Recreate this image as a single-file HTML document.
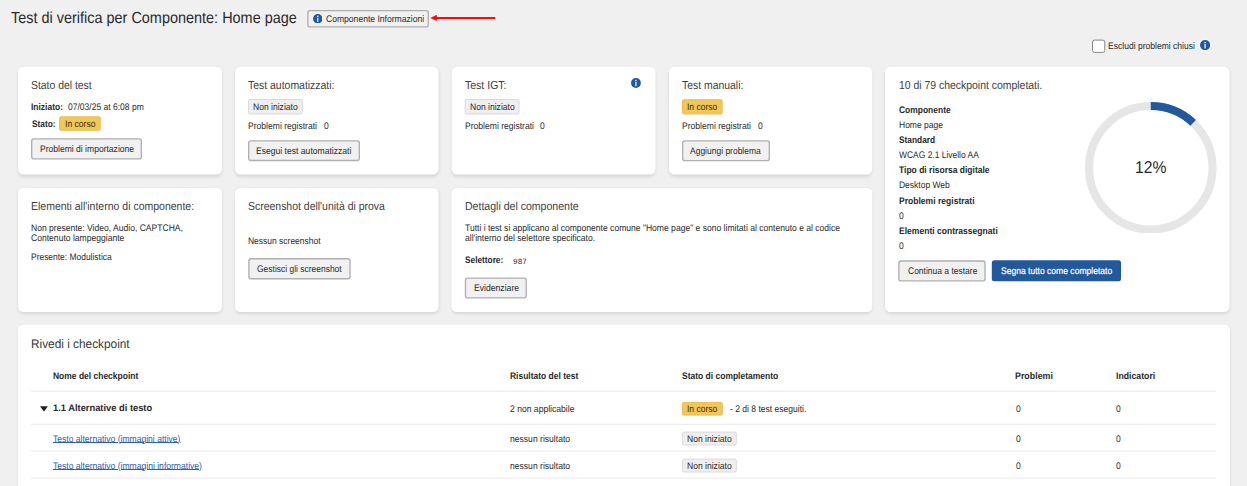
<!DOCTYPE html>
<html><head><meta charset="utf-8">
<style>
*{box-sizing:border-box;margin:0;padding:0}
html,body{width:1247px;height:486px;overflow:hidden;background:#f0f0f0;font-family:"Liberation Sans",sans-serif;color:#222;text-rendering:geometricPrecision}
.a{position:absolute;white-space:nowrap;line-height:1;transform-origin:0 0}
.sh{position:absolute;border-radius:5px;box-shadow:0 1.5px 3.5px 1px rgba(0,0,0,.11)}
</style></head><body>
<div class="sh" style="left:19.0px;top:67.8px;width:202.0px;height:105.8px"></div>
<div class="sh" style="left:236.0px;top:67.8px;width:201.5px;height:105.8px"></div>
<div class="sh" style="left:452.7px;top:67.8px;width:201.8px;height:105.8px"></div>
<div class="sh" style="left:670.0px;top:67.8px;width:201.3px;height:105.8px"></div>
<div class="sh" style="left:886.0px;top:67.8px;width:342.6px;height:243.2px"></div>
<div class="sh" style="left:19.0px;top:188.9px;width:202.0px;height:122.1px"></div>
<div class="sh" style="left:236.0px;top:188.9px;width:201.5px;height:122.1px"></div>
<div class="sh" style="left:452.5px;top:188.9px;width:418.8px;height:122.1px"></div>
<div class="sh" style="left:18.7px;top:325.8px;width:1210.3px;height:193.2px"></div>
<svg class="a" style="left:0;top:0" width="1247" height="486" viewBox="0 0 1247 486">
<rect x="307.88" y="10.58" width="120.35" height="16.25" rx="2.2" fill="#f1f1f1" stroke="#b0b0b0" stroke-width="1.35"/>
<rect x="1092.50" y="40.10" width="12.30" height="12.30" rx="2" fill="#fff" stroke="#858585" stroke-width="1"/>
<rect x="18.00" y="66.80" width="204.00" height="107.80" rx="5.5" fill="#fff"/>
<rect x="235.00" y="66.80" width="203.50" height="107.80" rx="5.5" fill="#fff"/>
<rect x="451.70" y="66.80" width="203.80" height="107.80" rx="5.5" fill="#fff"/>
<rect x="669.00" y="66.80" width="203.30" height="107.80" rx="5.5" fill="#fff"/>
<rect x="885.00" y="66.80" width="344.60" height="245.20" rx="5.5" fill="#fff"/>
<rect x="18.00" y="187.90" width="204.00" height="124.10" rx="5.5" fill="#fff"/>
<rect x="235.00" y="187.90" width="203.50" height="124.10" rx="5.5" fill="#fff"/>
<rect x="451.50" y="187.90" width="420.80" height="124.10" rx="5.5" fill="#fff"/>
<rect x="17.70" y="324.80" width="1212.30" height="195.20" rx="5.5" fill="#fff"/>
<rect x="59.60" y="116.80" width="40.70" height="13.50" rx="1.2" fill="#f1c75a" stroke="#ecc04e" stroke-width="1"/>
<rect x="31.68" y="138.88" width="109.65" height="19.95" rx="2.2" fill="#f1f1f1" stroke="#b0b0b0" stroke-width="1.35"/>
<rect x="248.50" y="99.50" width="53.80" height="14.50" rx="1.5" fill="#efefef" stroke="#dadada" stroke-width="1"/>
<rect x="248.68" y="140.88" width="110.65" height="19.65" rx="2.2" fill="#f1f1f1" stroke="#b0b0b0" stroke-width="1.35"/>
<rect x="465.20" y="99.50" width="53.80" height="14.50" rx="1.5" fill="#efefef" stroke="#dadada" stroke-width="1"/>
<rect x="682.50" y="99.70" width="39.70" height="14.30" rx="1.2" fill="#f1c75a" stroke="#ecc04e" stroke-width="1"/>
<rect x="682.67" y="140.88" width="86.65" height="19.75" rx="2.2" fill="#f1f1f1" stroke="#b0b0b0" stroke-width="1.35"/>
<rect x="898.88" y="260.98" width="86.15" height="19.85" rx="2.2" fill="#f1f1f1" stroke="#b0b0b0" stroke-width="1.35"/>
<rect x="991.80" y="260.30" width="129.20" height="21.00" rx="2.5" fill="#22589c"/>
<rect x="248.88" y="258.78" width="101.15" height="19.95" rx="2.2" fill="#f1f1f1" stroke="#b0b0b0" stroke-width="1.35"/>
<rect x="465.48" y="278.07" width="60.75" height="19.85" rx="2.2" fill="#f1f1f1" stroke="#b0b0b0" stroke-width="1.35"/>
<rect x="31.00" y="390.60" width="1185.00" height="1.00" rx="0" fill="#eaeaea"/>
<rect x="682.40" y="402.50" width="39.90" height="12.60" rx="1.2" fill="#f1c75a" stroke="#ecc04e" stroke-width="1"/>
<rect x="31.00" y="423.80" width="1185.00" height="1.00" rx="0" fill="#eaeaea"/>
<rect x="682.50" y="432.10" width="53.80" height="12.90" rx="1.5" fill="#efefef" stroke="#dadada" stroke-width="1"/>
<rect x="682.50" y="459.10" width="53.80" height="12.90" rx="1.5" fill="#efefef" stroke="#dadada" stroke-width="1"/>
<rect x="31.00" y="450.50" width="1185.00" height="1.00" rx="0" fill="#eaeaea"/>
<rect x="31.00" y="477.60" width="1185.00" height="1.00" rx="0" fill="#eaeaea"/>
</svg>
<div class="a" style="left:11.10px;top:11px;font-size:16px;color:#2a2a2a;transform:scaleX(0.9027);">Test di verifica per Componente: Home page</div>
<svg class="a" style="left:312.90px;top:13.70px" width="9.5" height="9.5" viewBox="0 0 10 10"><circle cx="5" cy="5" r="5" fill="#1f58a3"/><rect x="4.4" y="4" width="1.2" height="4.3" fill="#fff"/><rect x="4.35" y="1.8" width="1.3" height="1.5" fill="#fff"/></svg>
<div class="a" style="left:326.10px;top:15px;font-size:9.5px;color:#2a2a2a;transform:scaleX(0.9018);">Componente Informazioni</div>
<svg class="a" style="left:428px;top:12px" width="72" height="12" viewBox="428 12 72 12"><path d="M436 17.95 H494.5" stroke="#fb0a0e" stroke-width="2" stroke-linecap="round"/><path d="M430.3 17.95 L436.9 14.8 L436.9 21.1 Z" fill="#fb0a0e"/></svg>
<div class="a" style="left:1108.20px;top:42px;font-size:9.5px;color:#2a2a2a;transform:scaleX(0.8994);">Escludi problemi chiusi</div>
<div class="a" style="left:1197.7px;top:37.6px;width:14.8px;height:14.8px;border-radius:50%;background:rgba(255,255,255,.35)"></div>
<svg class="a" style="left:1200.00px;top:39.90px" width="10.2" height="10.2" viewBox="0 0 10 10"><circle cx="5" cy="5" r="5" fill="#1f58a3"/><rect x="4.4" y="4" width="1.2" height="4.3" fill="#fff"/><rect x="4.35" y="1.8" width="1.3" height="1.5" fill="#fff"/></svg>
<div class="a" style="left:31.00px;top:80px;font-size:11.6px;color:#404040;transform:scaleX(0.8970);">Stato del test</div>
<div class="a" style="left:31.00px;top:103px;font-size:9.5px;font-weight:bold;color:#2a2a2a;transform:scaleX(0.8902);">Iniziato:</div>
<div class="a" style="left:67.70px;top:103px;font-size:9.5px;color:#2a2a2a;transform:scaleX(0.8960);">07/03/25 at 6:08 pm</div>
<div class="a" style="left:31.70px;top:120px;font-size:9.5px;font-weight:bold;color:#2a2a2a;transform:scaleX(0.8785);">Stato:</div>
<div class="a" style="left:64.80px;top:120px;font-size:9.5px;color:#43340f;transform:scaleX(0.9042);-webkit-text-stroke:.05px;">In corso</div>
<div class="a" style="left:39.60px;top:145px;font-size:9.5px;color:#2a2a2a;transform:scaleX(0.8996);">Problemi di importazione</div>
<div class="a" style="left:248.20px;top:80px;font-size:11.6px;color:#404040;transform:scaleX(0.9009);">Test automatizzati:</div>
<div class="a" style="left:253.20px;top:103px;font-size:9.5px;color:#2a2a2a;transform:scaleX(0.8996);">Non iniziato</div>
<div class="a" style="left:248.00px;top:122px;font-size:9.5px;color:#2a2a2a;transform:scaleX(0.9013);">Problemi registrati</div>
<div class="a" style="left:323.60px;top:122px;font-size:9.5px;color:#2a2a2a;transform:scaleX(0.9006);">0</div>
<div class="a" style="left:256.40px;top:147px;font-size:9.5px;color:#2a2a2a;transform:scaleX(0.9033);">Esegui test automatizzati</div>
<div class="a" style="left:464.70px;top:80px;font-size:11.6px;color:#404040;transform:scaleX(0.9073);">Test IGT:</div>
<svg class="a" style="left:630.75px;top:78.05px" width="9.9" height="9.9" viewBox="0 0 10 10"><circle cx="5" cy="5" r="5" fill="#1f58a3"/><rect x="4.4" y="4" width="1.2" height="4.3" fill="#fff"/><rect x="4.35" y="1.8" width="1.3" height="1.5" fill="#fff"/></svg>
<div class="a" style="left:469.90px;top:103px;font-size:9.5px;color:#2a2a2a;transform:scaleX(0.8996);">Non iniziato</div>
<div class="a" style="left:464.70px;top:122px;font-size:9.5px;color:#2a2a2a;transform:scaleX(0.9013);">Problemi registrati</div>
<div class="a" style="left:540.30px;top:122px;font-size:9.5px;color:#2a2a2a;transform:scaleX(0.9006);">0</div>
<div class="a" style="left:682.20px;top:80px;font-size:11.6px;color:#404040;transform:scaleX(0.8989);">Test manuali:</div>
<div class="a" style="left:687.30px;top:103px;font-size:9.5px;color:#43340f;transform:scaleX(0.8953);-webkit-text-stroke:.05px;">In corso</div>
<div class="a" style="left:682.20px;top:122px;font-size:9.5px;color:#2a2a2a;transform:scaleX(0.9013);">Problemi registrati</div>
<div class="a" style="left:757.80px;top:122px;font-size:9.5px;color:#2a2a2a;transform:scaleX(0.9006);">0</div>
<div class="a" style="left:690.00px;top:147px;font-size:9.5px;color:#2a2a2a;transform:scaleX(0.8932);">Aggiungi problema</div>
<div class="a" style="left:899.40px;top:80px;font-size:11.6px;color:#404040;transform:scaleX(0.8996);">10 di 79 checkpoint completati.</div>
<div class="a" style="left:899.20px;top:106px;font-size:9.5px;font-weight:bold;color:#2a2a2a;transform:scaleX(0.8897);">Componente</div>
<div class="a" style="left:899.20px;top:121px;font-size:9.5px;color:#2a2a2a;transform:scaleX(0.8949);">Home page</div>
<div class="a" style="left:899.20px;top:136px;font-size:9.5px;font-weight:bold;color:#2a2a2a;transform:scaleX(0.8775);">Standard</div>
<div class="a" style="left:899.20px;top:151px;font-size:9.5px;color:#2a2a2a;transform:scaleX(0.8892);">WCAG 2.1 Livello AA</div>
<div class="a" style="left:899.20px;top:166px;font-size:9.5px;font-weight:bold;color:#2a2a2a;transform:scaleX(0.8950);">Tipo di risorsa digitale</div>
<div class="a" style="left:899.20px;top:181px;font-size:9.5px;color:#2a2a2a;transform:scaleX(0.8927);">Desktop Web</div>
<div class="a" style="left:899.20px;top:197px;font-size:9.5px;font-weight:bold;color:#2a2a2a;transform:scaleX(0.9003);">Problemi registrati</div>
<div class="a" style="left:899.20px;top:212px;font-size:9.5px;color:#2a2a2a;transform:scaleX(0.9006);">0</div>
<div class="a" style="left:899.20px;top:227px;font-size:9.5px;font-weight:bold;color:#2a2a2a;transform:scaleX(0.8995);">Elementi contrassegnati</div>
<div class="a" style="left:899.20px;top:242px;font-size:9.5px;color:#2a2a2a;transform:scaleX(0.9006);">0</div>
<div class="a" style="left:907.70px;top:267px;font-size:9.5px;color:#2a2a2a;transform:scaleX(0.8933);">Continua a testare</div>
<div class="a" style="left:1001.00px;top:267px;font-size:9.5px;color:#fff;transform:scaleX(0.8995);-webkit-text-stroke:.2px;">Segna tutto come completato</div>
<svg class="a" style="left:1084.95px;top:101.80px" width="131.6" height="131.6" viewBox="0 0 131.6 131.6"><circle cx="65.8" cy="65.8" r="61.75" fill="none" stroke="#e6e6e6" stroke-width="8.1"/><circle cx="65.8" cy="65.8" r="61.75" fill="none" stroke="#22589c" stroke-width="8.1" stroke-dasharray="46.56 387.99" transform="rotate(-90 65.8 65.8)"/></svg>
<div class="a" style="left:1135.28px;top:159px;font-size:17.1px;color:#2a2a2a;transform:scaleX(0.9178);">12%</div>
<div class="a" style="left:31.00px;top:201px;font-size:11.6px;color:#404040;transform:scaleX(0.9057);">Elementi all'interno di componente:</div>
<div class="a" style="left:31.00px;top:224px;font-size:9.5px;color:#2a2a2a;transform:scaleX(0.8997);">Non presente: Video, Audio, CAPTCHA,</div>
<div class="a" style="left:31.00px;top:234px;font-size:9.5px;color:#2a2a2a;transform:scaleX(0.9018);">Contenuto lampeggiante</div>
<div class="a" style="left:31.00px;top:253px;font-size:9.5px;color:#2a2a2a;transform:scaleX(0.8882);">Presente: Modulistica</div>
<div class="a" style="left:248.20px;top:201px;font-size:11.6px;color:#404040;transform:scaleX(0.9022);">Screenshot dell'unità di prova</div>
<div class="a" style="left:248.20px;top:237px;font-size:9.5px;color:#2a2a2a;transform:scaleX(0.8925);">Nessun screenshot</div>
<div class="a" style="left:256.80px;top:265px;font-size:9.5px;color:#2a2a2a;transform:scaleX(0.8910);">Gestisci gli screenshot</div>
<div class="a" style="left:465.10px;top:201px;font-size:11.6px;color:#404040;transform:scaleX(0.9094);">Dettagli del componente</div>
<div class="a" style="left:465.10px;top:224px;font-size:9.5px;color:#2a2a2a;transform:scaleX(0.9000);">Tutti i test si applicano al componente comune "Home page" e sono limitati al contenuto e al codice</div>
<div class="a" style="left:465.10px;top:234px;font-size:9.5px;color:#2a2a2a;transform:scaleX(0.8975);">all'interno del selettore specificato.</div>
<div class="a" style="left:465.10px;top:256px;font-size:9.5px;font-weight:bold;color:#2a2a2a;transform:scaleX(0.8728);">Selettore:</div>
<div class="a" style="left:513.00px;top:259px;font-size:8px;font-family:'Liberation Mono',monospace;color:#2a2a2a;transform:scaleX(0.9725);">987</div>
<div class="a" style="left:473.60px;top:284px;font-size:9.5px;color:#2a2a2a;transform:scaleX(0.9077);">Evidenziare</div>
<div class="a" style="left:30.55px;top:338px;font-size:12.4px;color:#383838;transform:scaleX(0.9547);">Rivedi i checkpoint</div>
<div class="a" style="left:53.40px;top:372px;font-size:9.5px;font-weight:bold;color:#2a2a2a;transform:scaleX(0.8923);">Nome del checkpoint</div>
<div class="a" style="left:509.80px;top:372px;font-size:9.5px;font-weight:bold;color:#2a2a2a;transform:scaleX(0.8918);">Risultato del test</div>
<div class="a" style="left:682.30px;top:372px;font-size:9.5px;font-weight:bold;color:#2a2a2a;transform:scaleX(0.8936);">Stato di completamento</div>
<div class="a" style="left:1015.10px;top:372px;font-size:9.5px;font-weight:bold;color:#2a2a2a;transform:scaleX(0.9323);">Problemi</div>
<div class="a" style="left:1115.90px;top:372px;font-size:9.5px;font-weight:bold;color:#2a2a2a;transform:scaleX(0.9165);">Indicatori</div>
<svg class="a" style="left:40.05px;top:406.35px" width="7.9" height="5.5" viewBox="0 0 7.6 5.4" preserveAspectRatio="none"><path d="M0.6 0.2 H7 Q7.7 0.2 7.3 0.8 L4.2 4.9 Q3.8 5.4 3.4 4.9 L0.3 0.8 Q-0.1 0.2 0.6 0.2 Z" fill="#222"/></svg>
<div class="a" style="left:53.30px;top:404px;font-size:9.6px;font-weight:bold;color:#2a2a2a;transform:scaleX(0.9721);">1.1 Alternative di testo</div>
<div class="a" style="left:509.80px;top:405px;font-size:9.5px;color:#2a2a2a;transform:scaleX(0.9039);">2 non applicabile</div>
<div class="a" style="left:687.30px;top:405px;font-size:9.5px;color:#43340f;transform:scaleX(0.8953);-webkit-text-stroke:.05px;">In corso</div>
<div class="a" style="left:729.50px;top:405px;font-size:9.5px;color:#2a2a2a;transform:scaleX(0.8972);">- 2 di 8 test eseguiti.</div>
<div class="a" style="left:1015.80px;top:405px;font-size:9.5px;color:#2a2a2a;transform:scaleX(0.9006);">0</div>
<div class="a" style="left:1116.20px;top:405px;font-size:9.5px;color:#2a2a2a;transform:scaleX(0.9006);">0</div>
<div class="a" style="left:53.40px;top:435px;font-size:9.5px;color:#2d5dab;transform:scaleX(0.9007);text-decoration:underline;text-decoration-thickness:.75px;text-underline-offset:.2px;">Testo alternativo (immagini attive)</div>
<div class="a" style="left:509.80px;top:435px;font-size:9.5px;color:#2a2a2a;transform:scaleX(0.9026);">nessun risultato</div>
<div class="a" style="left:687.10px;top:435px;font-size:9.5px;color:#2a2a2a;transform:scaleX(0.8996);">Non iniziato</div>
<div class="a" style="left:1015.80px;top:435px;font-size:9.5px;color:#2a2a2a;transform:scaleX(0.9006);">0</div>
<div class="a" style="left:1116.20px;top:435px;font-size:9.5px;color:#2a2a2a;transform:scaleX(0.9006);">0</div>
<div class="a" style="left:53.40px;top:462px;font-size:9.5px;color:#2d5dab;transform:scaleX(0.9013);text-decoration:underline;text-decoration-thickness:.75px;text-underline-offset:.2px;">Testo alternativo (immagini informative)</div>
<div class="a" style="left:509.80px;top:462px;font-size:9.5px;color:#2a2a2a;transform:scaleX(0.9026);">nessun risultato</div>
<div class="a" style="left:687.10px;top:462px;font-size:9.5px;color:#2a2a2a;transform:scaleX(0.8996);">Non iniziato</div>
<div class="a" style="left:1015.80px;top:462px;font-size:9.5px;color:#2a2a2a;transform:scaleX(0.9006);">0</div>
<div class="a" style="left:1116.20px;top:462px;font-size:9.5px;color:#2a2a2a;transform:scaleX(0.9006);">0</div>
</body></html>
